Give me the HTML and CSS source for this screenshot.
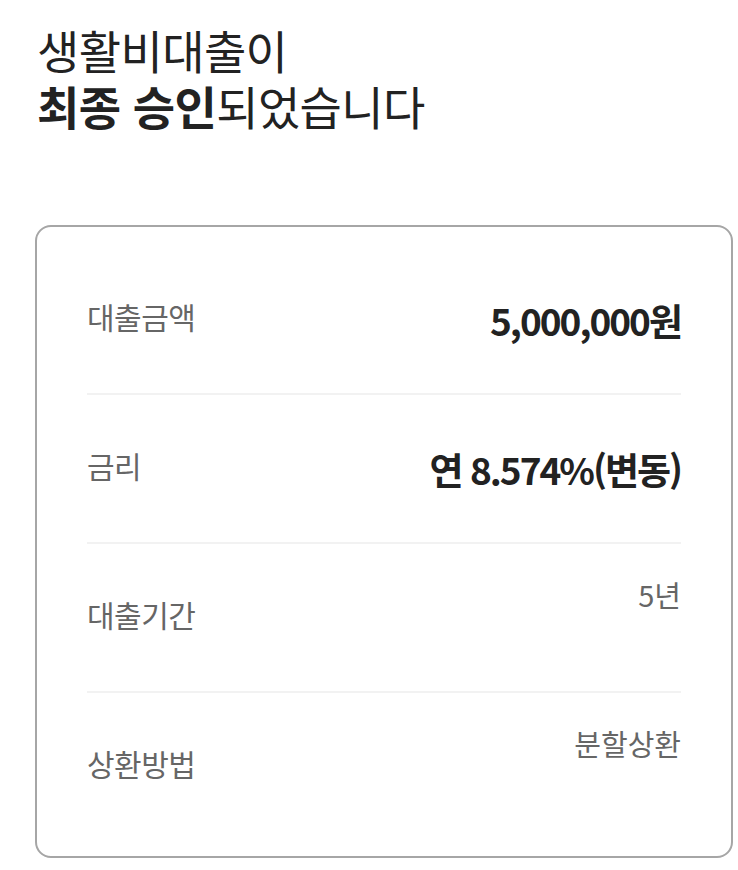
FILE: index.html
```html
<!DOCTYPE html>
<html lang="ko">
<head>
  <meta charset="UTF-8" />
  <meta name="viewport" content="width=device-width, initial-scale=1.0"/>
  <title>대출 승인</title>
  <link rel="stylesheet" href="styles.css">
</head>
<body>
  <div class="page">
    <h1 class="title">
      생활비대출이<br>
      <strong>최종 승인</strong>되었습니다
    </h1>

    <div class="card">
      <div class="row">
        <span class="label">대출금액</span>
        <span class="value strong">5,000,000원</span>
      </div>
      <div class="row">
        <span class="label">금리</span>
        <span class="value strong">연 8.574%(변동)</span>
      </div>
      <div class="row">
        <span class="label">대출기간</span>
        <span class="value">5년</span>
      </div>
      <div class="row">
        <span class="label">상환방법</span>
        <span class="value">분할상환</span>
      </div>
    </div>
  </div>
</body>
</html>
```

FILE: styles.css
```css
* {
  box-sizing: border-box;
  font-family: "Noto Sans CJK KR", "Noto Sans", sans-serif;
}

body {
  margin: 0;
  background: #fff;
  color: #222;
}

.page {
  padding: 21px 5px 0 35px;
}

.title {
  margin: 0 0 92px 2px;
  font-size: 46px;
  line-height: 56px;
  font-weight: 400;
  letter-spacing: -0.6px;
  color: #222;
}

.title strong {
  font-weight: 700;
}

/* summary card */
.card {
  border: 2px solid #a6a6a6;
  border-radius: 16px;
  padding: 19px 50px 14px;
}

.row {
  display: flex;
  justify-content: space-between;
  align-items: flex-start;
  height: 149px;
  padding-top: 34px;
  border-bottom: 2px solid #f2f2f2;
}

.row:last-child {
  border-bottom: none;
}

.label {
  margin-top: 20px;
  font-size: 30px;
  line-height: 32px;
  letter-spacing: -0.5px;
  color: #666;
}

.value {
  font-size: 29px;
  line-height: 32px;
  letter-spacing: 0;
  color: #666;
}

.value.strong {
  margin-top: 20px;
  font-size: 37px;
  line-height: 40px;
  font-weight: 700;
  letter-spacing: -2px;
  color: #222;
}
```
